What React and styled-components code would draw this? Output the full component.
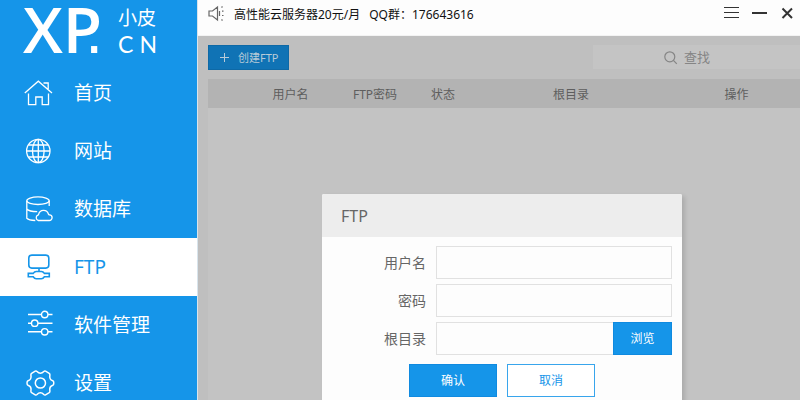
import React from 'react';
import styled, { createGlobalStyle, css } from 'styled-components';

const blue = '#1595e9';
const cjk = '"Noto Sans CJK SC", sans-serif';

const GlobalStyle = createGlobalStyle`
  *, *::before, *::after { box-sizing: border-box; }
  body { margin: 0; background: #c3c3c3; }
  button, input { font: inherit; margin: 0; }
  svg { display: block; flex: none; overflow: visible; }
`;

const Window = styled.div`
  display: flex;
  height: 100vh;
  overflow: hidden;
  font-family: "Noto Sans", ${cjk};
  font-size: 12px;
`;

const Sidebar = styled.aside`
  flex: none;
  width: 197px;
  background: ${blue};
  color: #fff;
`;

const Logo = styled.div`
  display: flex;
  align-items: flex-start;
  height: 64px;
  padding-left: 23px;
`;

const LogoMark = styled.div`
  width: 95px;
  font: 600 64px/58px "Open Sans", sans-serif;
  white-space: nowrap;
`;

const LogoDot = styled.span`
  margin-left: -17px;
  font-family: "Liberation Sans", sans-serif;
  font-weight: 400;
  line-height: 1px;
`;

const LogoName = styled.div`
  width: 39px;
  padding-top: 4px;
  font: 400 19px/26px ${cjk};
  white-space: nowrap;
`;

const LogoDomain = styled.div`
  display: flex;
  justify-content: space-between;
  font: 400 23px/28px Lato, sans-serif;
`;

const NavLink = styled.a`
  display: flex;
  align-items: center;
  gap: 22px;
  height: 58px;
  padding-left: 24px;
  font-size: 19px;
  line-height: 28px;
  color: #fff;
  text-decoration: none;
  ${p => p.$active && css`
    background: #fff;
    color: ${blue};
  `}
`;

const Main = styled.main`
  position: relative;
  flex: 1;
  min-width: 0;
  border-left: 1px solid #d8e4ec;
  background: #bfbfbf;
`;

const TitleBar = styled.header`
  display: flex;
  align-items: center;
  height: 36px;
  padding: 0 6px 8px 10px;
  background: #fdfdfd;
  border-bottom: 1px solid #f3f3f3;
  color: #111;
`;

const Notice = styled.span`
  margin-left: 9px;
  white-space: nowrap;
`;

const WindowButtons = styled.div`
  display: flex;
  gap: 13px;
  margin-left: auto;
`;

const IconButton = styled.button`
  padding: 0;
  border: 0;
  background: none;
  color: #333;
`;

const Toolbar = styled.div`
  display: flex;
  justify-content: space-between;
  height: 43px;
  padding: 9px 0 0 10px;
`;

const CreateButton = styled.button`
  display: flex;
  align-items: center;
  gap: 9px;
  width: 81px;
  height: 25px;
  padding: 0 0 0 11px;
  border: 1px solid #0e69a6;
  background: #1073b5;
  color: #b9cbd8;
  font-size: 11px;
  line-height: 16px;
  white-space: nowrap;
`;

const Search = styled.label`
  display: flex;
  align-items: center;
  gap: 7px;
  width: 207px;
  height: 24px;
  padding-left: 71px;
  background: #c4c4c4;
  color: #858585;
`;

const SearchInput = styled.input`
  width: 80px;
  padding: 0;
  border: 0;
  outline: 0;
  background: none;
  font-size: 13px;
  line-height: 20px;
  &::placeholder { color: #858585; opacity: 1; }
`;

const TableArea = styled.div`
  min-height: calc(100vh - 79px);
  margin-left: 10px;
  background: #c3c3c3;
`;

const Table = styled.table`
  width: 100%;
  table-layout: fixed;
  border-collapse: collapse;
`;

const HeadCell = styled.th`
  width: ${p => p.$width};
  height: 29px;
  padding: 2px 0 0;
  background: #b3b3b3;
  color: #5e5e5e;
  font-weight: 400;
  line-height: 18px;
`;

const Overlay = styled.div`
  position: absolute;
  inset: 0;
  display: flex;
  justify-content: center;
  align-items: flex-start;
  padding: 194px 0 0 6px;
`;

const Dialog = styled.form`
  width: 360px;
  min-height: 216px;
  border-radius: 2px;
  background: #fdfdfd;
  box-shadow: 3px 2px 4px rgba(0, 0, 0, 0.12);
`;

const DialogTitle = styled.h2`
  height: 43px;
  margin: 0;
  padding-left: 19px;
  border-radius: 2px 2px 0 0;
  background: #ededed;
  color: #666;
  font-size: 16px;
  font-weight: 400;
  line-height: 44px;
`;

const Fields = styled.div`
  display: grid;
  grid-template-columns: minmax(0, 1fr);
  gap: 5px;
  padding: 9px 10px 9px 0;
`;

const Field = styled.div`
  display: flex;
  align-items: center;
  height: 33px;
`;

const FieldLabel = styled.label`
  flex: none;
  width: 104px;
  margin-right: 10px;
  color: #666;
  font-size: 14px;
  line-height: 20px;
  text-align: right;
`;

const TextInput = styled.input`
  flex: 1;
  min-width: 0;
  height: 33px;
  padding: 0 8px;
  border: 1px solid #e1e1e1;
  border-right-width: ${p => (p.$joined ? '0' : '1px')};
  background: #fdfdfd;
  outline: 0;
`;

const Button = styled.button`
  flex: none;
  width: ${p => (p.$narrow ? '59px' : '88px')};
  height: 33px;
  padding: 0;
  border: 1px solid ${p => (p.$outline ? '#38a5ec' : '#0f8ae0')};
  background: ${p => (p.$outline ? '#fff' : blue)};
  color: ${p => (p.$outline ? blue : '#fff')};
  line-height: 18px;
`;

const Actions = styled.div`
  display: flex;
  justify-content: center;
  gap: 10px;
`;

const Icon = ({ size = 28, stroke = 1.3, children }) => (
  <svg width={size} height={size} viewBox={`0 0 ${size} ${size}`} fill="none" stroke="currentColor" strokeWidth={stroke} aria-hidden="true">
    {children}
  </svg>
);

const HomeIcon = () => (
  <Icon>
    <path d="M.8 14 14.3 2.2 28 14M19.5 4h4.7v6M4.5 14.5v11.2h7.3V18h6.4v7.7h6.3V14.5" />
  </Icon>
);

const GlobeIcon = () => (
  <Icon>
    <circle cx="14.3" cy="14" r="11.7" />
    <ellipse cx="14.3" cy="14" rx="5.8" ry="11.7" />
    <path d="M14.3 2.3v23.4M2.6 14H26M4.6 8H24M4.6 20H24" />
  </Icon>
);

const DatabaseIcon = () => (
  <Icon>
    <ellipse cx="14" cy="5.7" rx="11.2" ry="3.8" />
    <path d="M2.8 5.7v17.5c1.5 1.5 4.5 2.1 8.5 2.3M2.8 14c1.5 1.8 6 2.7 10.4 2.7M25.2 5.7v5.3" />
    <path d="M16 25.5h9.2a2.8 2.8 0 0 0 .2-5.6c-.5 0-.8-.3-1-.9a5.1 5.1 0 0 0-9.8.3c0 .5-.2.7-.7.9a2.8 2.8 0 0 0 .5 5.3z" />
  </Icon>
);

const FtpIcon = () => (
  <Icon stroke={1.6}>
    <rect x="4.8" y="2.1" width="20" height="13" rx="3" />
    <path d="M15 15.1v3.4M4.3 20.4h4.9q1.3-1.9 3-1.9h5.2q1.7 0 3 1.9h4.9v3.4h-4.9q-1.3 1.9-3 1.9h-5.2q-1.7 0-3-1.9H4.3z" />
  </Icon>
);

const SlidersIcon = () => (
  <Icon stroke={1.4}>
    <path d="M4 3.5h13.3M24 3.5h4.5M4 12.2h3.3M14 12.2h14.5M4 20.8h13.3M24 20.8h4.5" />
    <circle cx="20.7" cy="3.5" r="3.2" />
    <circle cx="10.7" cy="12.2" r="3.2" />
    <circle cx="20.7" cy="20.8" r="3.2" />
  </Icon>
);

const GearIcon = () => (
  <Icon stroke={1.5}>
    <circle cx="16.4" cy="14" r="5.1" />
    <path d="M11.2 2.2 7.6 4.3q-.9.6-.7 1.7c.6 3-.7 5.1-2.9 5.8q-1 .4-1 2.2t1 2.2c2.2.7 3.5 2.8 2.9 5.8q-.2 1.1.7 1.7l3.6 2.1q1 .5 1.8-.3c2.1-2.3 4.7-2.3 6.8 0q.8.8 1.8.3l3.6-2.1q.9-.6.7-1.7c-.6-3 .7-5.1 2.9-5.8q1-.4 1-2.2t-1-2.2c-2.2-.7-3.5-2.8-2.9-5.8q.2-1.1-.7-1.7l-3.6-2.1q-1-.5-1.8.3c-2.1 2.3-4.7 2.3-6.8 0q-.8-.8-1.8-.3z" />
  </Icon>
);

const SpeakerGlyph = styled.span`
  color: #666;
`;

const SpeakerIcon = () => (
  <SpeakerGlyph>
    <Icon size={17} stroke={1.2}>
      <path d="M1 6h3.5l5-4v13l-5-4H1zM11.5 6v5M13.5 2.5l1-1M14 6.2h1.5M14 10.5h1.5M13.5 14.5l1 1" />
    </Icon>
  </SpeakerGlyph>
);

const navItems = [
  { label: '首页', icon: HomeIcon },
  { label: '网站', icon: GlobeIcon },
  { label: '数据库', icon: DatabaseIcon },
  { label: 'FTP', icon: FtpIcon, active: true },
  { label: '软件管理', icon: SlidersIcon },
  { label: '设置', icon: GearIcon },
];

const columns = [
  { label: '', width: '40px' },
  { label: '用户名', width: '85px' },
  { label: 'FTP密码', width: '84px' },
  { label: '状态', width: '52px' },
  { label: '根目录', width: 'auto' },
  { label: '操作', width: '127px' },
];

export default function App() {
  return (
    <>
      <GlobalStyle />
      <Window>
        <Sidebar>
          <Logo>
            <LogoMark>XP<LogoDot>.</LogoDot></LogoMark>
            <LogoName>
              小皮
              <LogoDomain><span>C</span><span>N</span></LogoDomain>
            </LogoName>
          </Logo>
          <nav>
            {navItems.map(({ label, icon: NavIcon, active }) => (
              <NavLink key={label} href="#" $active={active} aria-current={active ? 'page' : undefined}>
                <NavIcon />
                {label}
              </NavLink>
            ))}
          </nav>
        </Sidebar>
        <Main>
          <TitleBar>
            <SpeakerIcon />
            <Notice>高性能云服务器20元/月</Notice>
            <Notice>QQ群：176643616</Notice>
            <WindowButtons>
              <IconButton aria-label="菜单">
                <Icon size={15} stroke={1}><path d="M0 1.5h15M0 6.5h15M0 11.5h15" /></Icon>
              </IconButton>
              <IconButton aria-label="最小化">
                <Icon size={15} stroke={2}><path d="M0 7h15" /></Icon>
              </IconButton>
              <IconButton aria-label="关闭">
                <Icon size={14} stroke={2}><path d="m2.5 1.5 9.5 9.5M12 1.5 2.5 11" /></Icon>
              </IconButton>
            </WindowButtons>
          </TitleBar>
          <Toolbar>
            <CreateButton>
              <Icon size={9} stroke={1}><path d="M4.5 0v9M0 4.5h9" /></Icon>
              创建FTP
            </CreateButton>
            <Search>
              <Icon size={13} stroke={1.2}>
                <circle cx="5.8" cy="5.8" r="5" />
                <path d="m9.4 9.4 3.4 3.4" />
              </Icon>
              <SearchInput type="text" placeholder="查找" aria-label="查找" />
            </Search>
          </Toolbar>
          <TableArea>
            <Table>
              <thead>
                <tr>
                  {columns.map(({ label, width }) => (
                    <HeadCell key={width} $width={width}>{label}</HeadCell>
                  ))}
                </tr>
              </thead>
            </Table>
          </TableArea>
          <Overlay>
            <Dialog role="dialog" aria-labelledby="dialog-title">
              <DialogTitle id="dialog-title">FTP</DialogTitle>
              <Fields>
                <Field>
                  <FieldLabel htmlFor="username">用户名</FieldLabel>
                  <TextInput id="username" type="text" />
                </Field>
                <Field>
                  <FieldLabel htmlFor="password">密码</FieldLabel>
                  <TextInput id="password" type="password" />
                </Field>
                <Field>
                  <FieldLabel htmlFor="root-dir">根目录</FieldLabel>
                  <TextInput id="root-dir" type="text" $joined />
                  <Button type="button" $narrow>浏览</Button>
                </Field>
              </Fields>
              <Actions>
                <Button type="button">确认</Button>
                <Button type="button" $outline>取消</Button>
              </Actions>
            </Dialog>
          </Overlay>
        </Main>
      </Window>
    </>
  );
}
